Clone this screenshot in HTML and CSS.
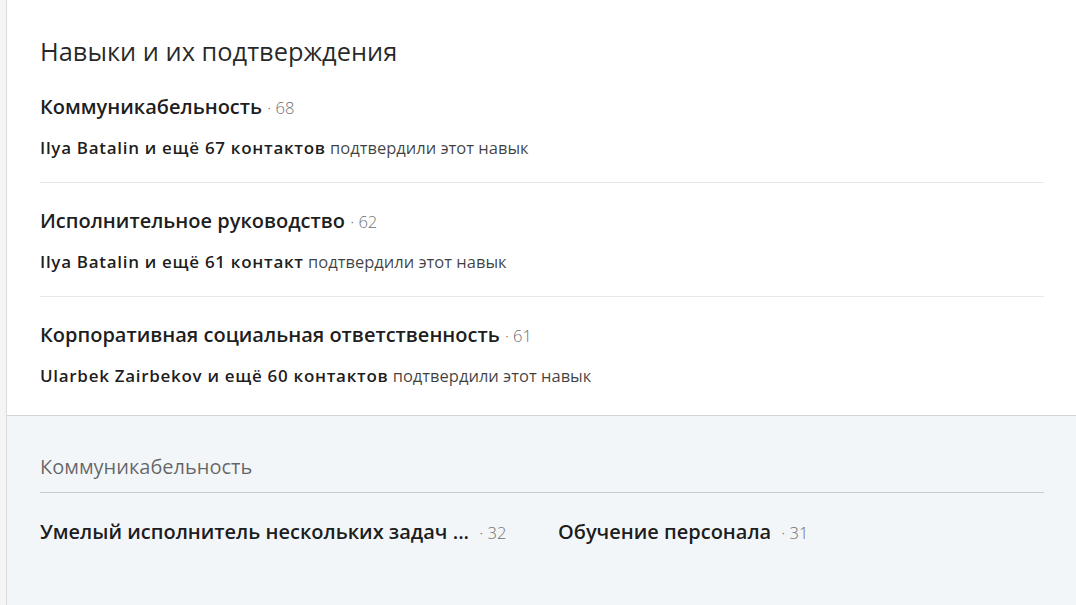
FILE: index.html
```html
<!DOCTYPE html>
<html lang="ru">
<head>
  <meta charset="UTF-8">
  <meta name="viewport" content="width=device-width, initial-scale=1.0">
  <title>Навыки и их подтверждения</title>
  <link rel="stylesheet" href="styles.css">
</head>
<body>
  <section class="skills-card">
    <div class="skills-main">
      <h2 class="skills-title">Навыки и их подтверждения</h2>
      <ul class="skill-list">
        <li class="skill-item">
          <div class="skill-name">Коммуникабельность <span class="skill-count">· 68</span></div>
          <p class="skill-endorsers"><strong>Ilya Batalin и ещё 67 контактов</strong> подтвердили этот навык</p>
        </li>
        <li class="skill-item">
          <div class="skill-name">Исполнительное руководство <span class="skill-count">· 62</span></div>
          <p class="skill-endorsers"><strong>Ilya Batalin и ещё 61 контакт</strong> подтвердили этот навык</p>
        </li>
        <li class="skill-item">
          <div class="skill-name">Корпоративная социальная ответственность <span class="skill-count">· 61</span></div>
          <p class="skill-endorsers"><strong>Ularbek Zairbekov и ещё 60 контактов</strong> подтвердили этот навык</p>
        </li>
      </ul>
    </div>

    <div class="skills-more">
      <h3 class="category-title">Коммуникабельность</h3>
      <ul class="category-list">
        <li class="category-item">
          <span class="skill-name">Умелый исполнитель нескольких задач ...</span>
          <span class="skill-count">· 32</span>
        </li>
        <li class="category-item">
          <span class="skill-name">Обучение персонала</span>
          <span class="skill-count">· 31</span>
        </li>
      </ul>
    </div>
  </section>
</body>
</html>
```

FILE: styles.css
```css
body {
  margin: 0;
  background-color: #f5f5f5;
  font-family: "Open Sans", "Noto Sans", Arial, sans-serif;
  color: rgba(0, 0, 0, 0.9);
}
.skills-card {
  margin-left: 6px;
  background-color: white;
  border-left: 1px solid #dcdcdc;
  min-height: 605px;
  display: flex;
  flex-direction: column;
}
.skills-main {
  padding: 35px 32px 5px 33px;
  border-bottom: 1px solid #d3d6d9;
}
.skills-title {
  margin: 0;
  font-size: 25.4px;
  line-height: 32px;
  font-weight: 400;
  color: rgba(0, 0, 0, 0.85);
}
.skill-list,
.category-list {
  list-style: none;
  margin: 0;
  padding: 0;
}
.skill-item {
  padding: 26px 0 24px;
  border-bottom: 1px solid #e6e9ec;
}
.skill-item:first-child {
  padding-top: 28px;
}
.skill-item:last-child {
  border-bottom: none;
}
.skill-name {
  font-size: 20px;
  line-height: 24px;
  font-weight: 600;
}
.skill-count {
  font-size: 16.5px;
  font-weight: 300;
  color: #707070;
}
.skill-endorsers {
  margin: 18px 0 0;
  font-size: 16.5px;
  line-height: 20px;
  color: rgba(0, 0, 0, 0.75);
}
.skill-endorsers strong {
  font-size: 17px;
  letter-spacing: 0.7px;
  font-weight: 600;
  color: rgba(0, 0, 0, 0.9);
}
.skills-more {
  flex: 1;
  background-color: #f3f6f8;
  padding: 37px 32px 0 33px;
}
.category-title {
  margin: 0;
  padding-bottom: 11px;
  border-bottom: 1px solid #c9ccd0;
  font-size: 20px;
  line-height: 28px;
  font-weight: 400;
  color: rgba(0, 0, 0, 0.6);
}
.category-list {
  display: grid;
  grid-template-columns: 1fr 1fr;
  column-gap: 32px;
  padding-top: 27px;
}
.category-item .skill-name {
  margin-right: 6px;
}
```
